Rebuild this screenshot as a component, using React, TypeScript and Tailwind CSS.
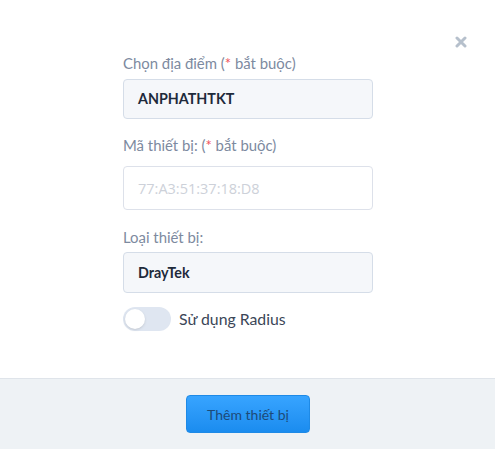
import React, { useState } from "react";

const Label = ({ children, className }: { children: React.ReactNode; className?: string }) => (
  <label className={`block text-[14.9px] leading-5 text-[#7d8aa0] ${className ?? ""}`}>{children}</label>
);

const Req = () => (
  <>
    (<span className="text-[#f0525b]">*</span> bắt buộc)
  </>
);

export default function App() {
  const [radius, setRadius] = useState(false);

  return (
    <div
      className="w-[495px] h-[449px] bg-white flex flex-col"
      style={{ fontFamily: "Lato, 'Open Sans', sans-serif" }}
    >
      <div className="relative flex-1">
        <button className="absolute left-[454px] top-[35px] w-[14px] h-[14px] flex items-center justify-center">
          <svg width="12" height="12" viewBox="0 0 12 12">
            <path d="M2 2 L10 10 M10 2 L2 10" stroke="#b6c0cc" strokeWidth="3" strokeLinecap="round" />
          </svg>
        </button>

        <div className="w-[250px] ml-[123px] pt-[53px]">
          <Label>
            Chọn địa điểm <Req />
          </Label>
          <div className="mt-[6px] h-[40px] rounded-[4px] border border-[#d5dde8] bg-[#f5f7fa] px-[14px] flex items-center text-[14.3px] font-bold text-[#1e2a3b]">
            ANPHATHTKT
          </div>

          <Label className="mt-[16px]">
            Mã thiết bị: <Req />
          </Label>
          <input
            placeholder="77:A3:51:37:18:D8"
            className="mt-[11px] w-full h-[44px] rounded-[4px] border border-[#dde1ea] bg-white px-[14px] text-[14.5px] text-[#1e2a3b] placeholder:text-[#cdd1d9] outline-none"
            style={{ fontFamily: "'Open Sans', sans-serif" }}
          />

          <Label className="mt-[17px]">Loại thiết bị:</Label>
          <div className="mt-[5px] h-[41px] rounded-[4px] border border-[#d5dde8] bg-[#f5f7fa] px-[14px] flex items-center text-[14.3px] font-bold text-[#1e2a3b]">
            DrayTek
          </div>

          <div className="mt-[14px] flex items-center gap-[8px]">
            <button
              onClick={() => setRadius(!radius)}
              className={`w-[48px] h-[24px] rounded-full p-[2px] flex ${radius ? "bg-[#2196f3] justify-end" : "bg-[#dfe6f1] justify-start"}`}
            >
              <span className="w-[20px] h-[20px] rounded-full bg-white shadow-sm" />
            </button>
            <span className="text-[15.8px] text-[#3b4657]">Sử dụng Radius</span>
          </div>
        </div>
      </div>

      <div className="h-[71px] border-t border-[#dfe4ea] bg-[#eef2f5] flex justify-center pt-[16px]">
        <button className="ml-[1px] w-[124px] h-[38px] rounded-[4px] bg-gradient-to-b from-[#37a4ff] to-[#1a8cef] border border-[#1e8ae6] text-[14px] text-[#1d4a78]">
          Thêm thiết bị
        </button>
      </div>
    </div>
  );
}
